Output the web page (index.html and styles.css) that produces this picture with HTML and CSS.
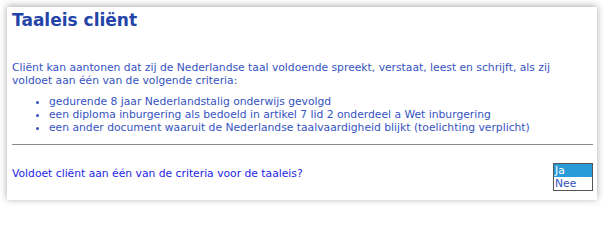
FILE: index.html
```html
<!DOCTYPE html>
<html>
<head>
<meta charset="utf-8">
<link rel="stylesheet" href="styles.css">
</head>
<body>
<div class="card">
  <h1 class="title">Taaleis cliënt</h1>
  <p class="intro">Cliënt kan aantonen dat zij de Nederlandse taal voldoende spreekt, verstaat, leest en schrijft, als zij voldoet aan één van de volgende criteria:</p>
  <ul class="criteria">
    <li>gedurende 8 jaar Nederlandstalig onderwijs gevolgd</li>
    <li>een diploma inburgering als bedoeld in artikel 7 lid 2 onderdeel a Wet inburgering</li>
    <li>een ander document waaruit de Nederlandse taalvaardigheid blijkt (toelichting verplicht)</li>
  </ul>
  <hr class="divider">
  <div class="question">
    <span class="q-text">Voldoet cliënt aan één van de criteria voor de taaleis?</span>
    <div class="listbox">
      <div class="opt selected">Ja</div>
      <div class="opt">Nee</div>
    </div>
  </div>
</div>
</body>
</html>
```
FILE: styles.css
```css
html, body {
  margin: 0;
  padding: 0;
  background: #ffffff;
}
body {
  padding: 7px;
  font-family: "DejaVu Sans", Verdana, sans-serif;
  font-size: 10.75px;
}
.card {
  background: #ffffff;
  box-shadow: 0 -1px 7px rgba(0, 0, 0, 0.35);
  height: 193px;
  box-sizing: border-box;
  padding: 2px 4px 0 5px;
}
.title {
  margin: 0;
  font-size: 17px;
  font-weight: bold;
  color: #2444a8;
  line-height: 22px;
}
.intro {
  margin: 30px 0 0 0;
  color: #3553bf;
  line-height: 13px;
}
.criteria {
  margin: 8px 0 0 0;
  padding-left: 37px;
  color: #3553bf;
  line-height: 13px;
}
.divider {
  margin: 10px 0 0 0;
  border: 0;
  border-top: 1px solid #8a8a8a;
  height: 0;
}
.question {
  display: flex;
  justify-content: space-between;
  align-items: flex-start;
  margin-top: 18px;
}
.q-text {
  color: #2424e6;
  margin-top: 4px;
  line-height: 13px;
}
.listbox {
  width: 38px;
  border: 1px solid #555;
  background: #fff;
}
.opt {
  color: #3553bf;
  line-height: 13px;
  padding-left: 1px;
}
.opt.selected {
  background: #2a9ad8;
  color: #fff;
}
```
